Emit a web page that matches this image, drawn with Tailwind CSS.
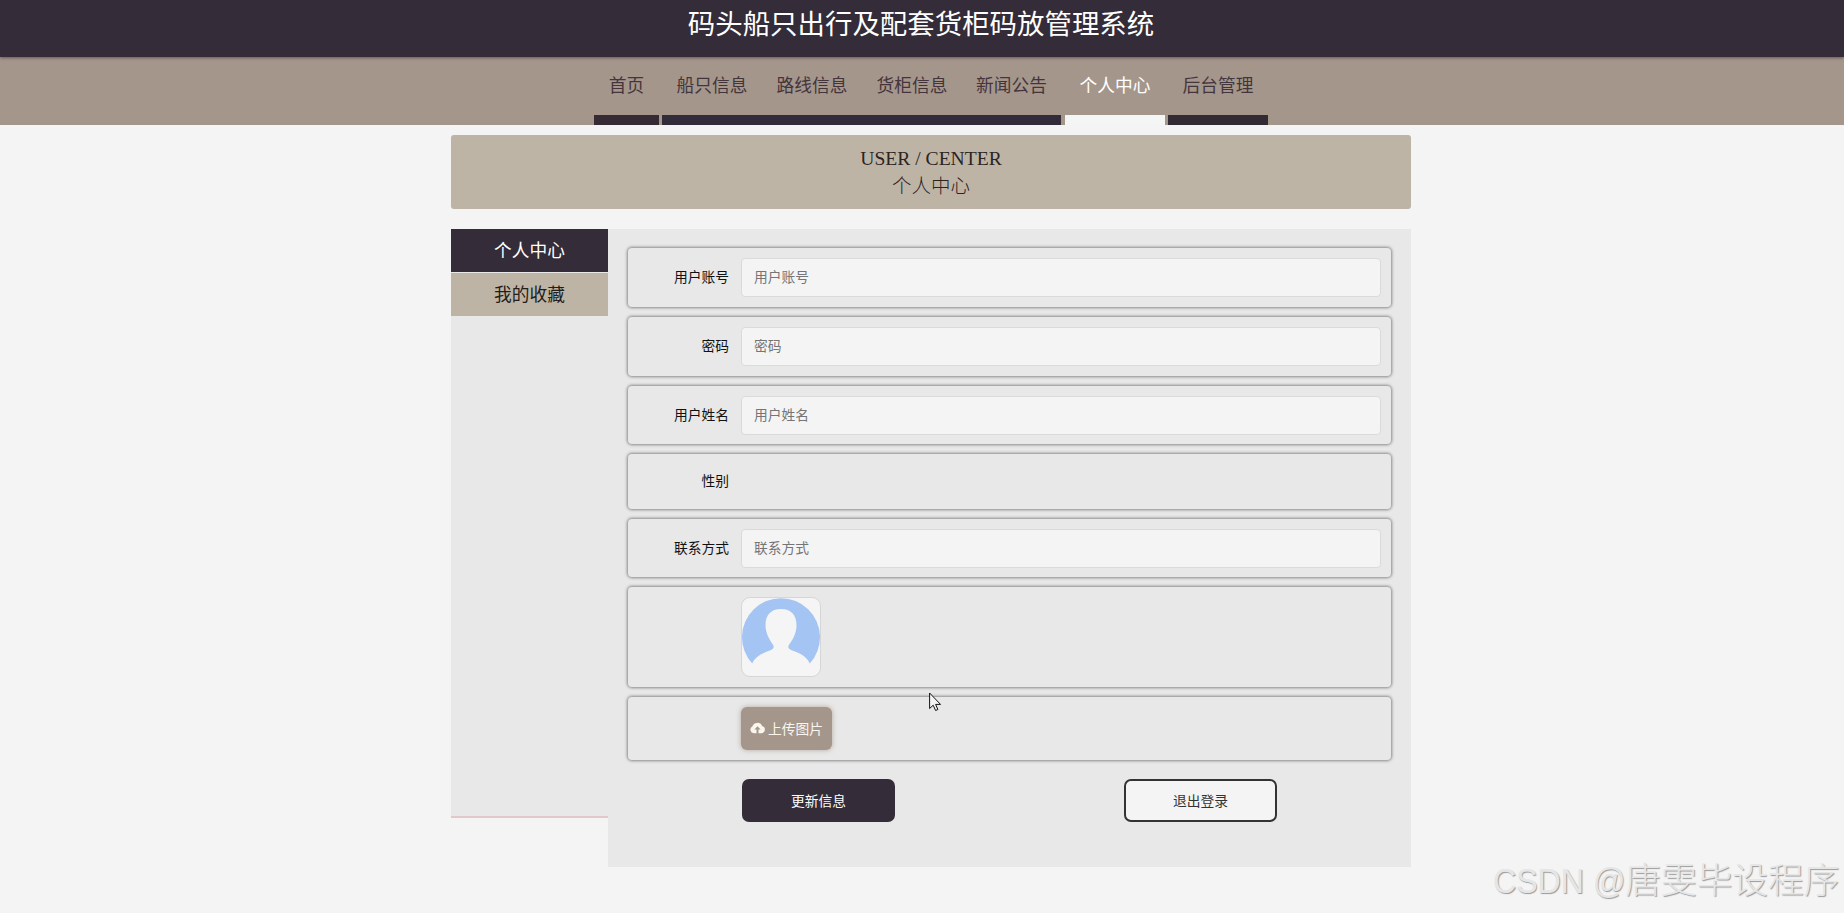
<!DOCTYPE html>
<html lang="zh-CN">
<head>
    <meta charset="UTF-8">
    <meta name="viewport" content="width=device-width, initial-scale=1.0">
    <title>码头船只出行及配套货柜码放管理系统</title>
    <script src="https://cdn.jsdelivr.net/npm/@tailwindcss/browser@4"></script>
</head>
<body class="relative h-[913px] overflow-hidden bg-[#f4f4f4] font-['Noto_Sans_CJK_SC',sans-serif] text-[13.75px] text-[#333]">
    <!-- Header -->
    <header class="relative z-10 flex h-[57px] justify-center bg-[#342c38] shadow-[0_1px_3px_rgba(0,0,0,0.4)]">
        <h1 class="pr-[2px] text-[27.45px] leading-[45px] text-white">码头船只出行及配套货柜码放管理系统</h1>
    </header>

    <!-- Navigation -->
    <nav class="h-[68px] bg-[#a5968c]">
        <div class="ml-[594px] flex h-full text-[17.7px] leading-[55px] text-[#44353c]">
            <a href="#" class="mr-[3px] w-[65px] border-b-[10px] border-[#362a34] text-center">首页</a>
            <a href="#" class="w-[100px] border-b-[10px] border-[#322b3a] text-center">船只信息</a>
            <a href="#" class="w-[100px] border-b-[10px] border-[#322b3a] text-center">路线信息</a>
            <a href="#" class="w-[100px] border-b-[10px] border-[#322b3a] text-center">货柜信息</a>
            <a href="#" class="mr-[4px] w-[99px] border-b-[10px] border-[#322b3a] text-center">新闻公告</a>
            <a href="#" class="mr-[3px] w-[100px] border-b-[10px] border-[#f4f5f5] text-center text-white">个人中心</a>
            <a href="#" class="w-[100px] border-b-[10px] border-[#322b33] text-center">后台管理</a>
        </div>
    </nav>

    <!-- Main Content -->
    <main class="ml-[451px] w-[960px] pt-[10px]">
        <div class="h-[74px] rounded-[3px] bg-[#beb4a6] pt-[11px] text-center text-[#2b241f]">
            <p class="font-['Liberation_Serif',serif] text-[19.6px] leading-[26px]">USER / CENTER</p>
            <p class="text-[19.5px] leading-[26px] font-light">个人中心</p>
        </div>

        <div class="mt-[20px] flex items-start">
            <!-- Sidebar -->
            <aside class="h-[589px] w-[157px] border-b-2 border-[#e2c8cb] bg-[#e8e8e8] text-center text-[17.7px] leading-[41px]">
                <a href="#" class="block h-[43px] bg-[#342c38] text-white">个人中心</a>
                <a href="#" class="mt-px block h-[43px] bg-[#beb4a6] text-[#231d1b]">我的收藏</a>
            </aside>

            <!-- User form -->
            <form class="h-[638px] w-[803px] bg-[#e8e8e8] pt-[19px] pr-[20px] pl-[20px]">
                <div class="flex h-[59px] items-center rounded-[4px] pr-[10px] shadow-[0_0_3px_1px_#888]">
                    <label class="w-[101px] pb-[2px] text-right text-[#111]">用户账号</label>
                    <input type="text" placeholder="用户账号" class="ml-[12px] h-[39px] min-w-0 flex-1 rounded-[4px] border border-[#dadada] bg-[#f4f4f4] px-[12px] pb-[3px] placeholder:text-[#757575]">
                </div>
                <div class="mt-[10px] flex h-[59px] items-center rounded-[4px] pr-[10px] shadow-[0_0_3px_1px_#888]">
                    <label class="w-[101px] pb-[2px] text-right text-[#111]">密码</label>
                    <input type="text" placeholder="密码" class="ml-[12px] h-[39px] min-w-0 flex-1 rounded-[4px] border border-[#dadada] bg-[#f4f4f4] px-[12px] pb-[3px] placeholder:text-[#757575]">
                </div>
                <div class="mt-[10px] flex h-[58px] items-center rounded-[4px] pr-[10px] shadow-[0_0_3px_1px_#888]">
                    <label class="w-[101px] pb-[2px] text-right text-[#111]">用户姓名</label>
                    <input type="text" placeholder="用户姓名" class="ml-[12px] h-[39px] min-w-0 flex-1 rounded-[4px] border border-[#dadada] bg-[#f4f4f4] px-[12px] pb-[3px] placeholder:text-[#757575]">
                </div>
                <div class="mt-[10px] flex h-[55px] items-center rounded-[4px] pr-[10px] shadow-[0_0_3px_1px_#888]">
                    <label class="w-[101px] pb-[2px] text-right text-[#111]">性别</label>
                </div>
                <div class="mt-[10px] flex h-[58px] items-center rounded-[4px] pr-[10px] shadow-[0_0_3px_1px_#888]">
                    <label class="w-[101px] pb-[2px] text-right text-[#111]">联系方式</label>
                    <input type="text" placeholder="联系方式" class="ml-[12px] h-[39px] min-w-0 flex-1 rounded-[4px] border border-[#dadada] bg-[#f4f4f4] px-[12px] pb-[3px] placeholder:text-[#757575]">
                </div>

                <!-- Avatar -->
                <div class="mt-[10px] flex h-[100px] items-center rounded-[4px] pl-[113px] shadow-[0_0_3px_1px_#888]">
                    <div class="h-[80px] w-[80px] overflow-hidden rounded-[9px] border border-[#d6d6d6] bg-[#f5f5f5]">
                        <svg viewBox="0 0 78 78" class="h-[78px] w-[78px]">
                            <path fill="#a4c5f4" d="M10.200 65.500A39 39 0 1 1 67.800 65.500C64 57 56 54.500 49 52C46 50.500 45.500 48.500 47.500 46C52 40 54.500 34 54.500 27C54.500 17 49 11 39 11C29 11 23.500 17 23.500 27C23.500 34 26.500 40 30.500 46C32.500 48.500 32 50.500 29 52C22 54.500 14 57.500 10.200 65.500Z"/>
                        </svg>
                    </div>
                </div>

                <!-- Upload -->
                <div class="mt-[10px] flex h-[63px] items-center rounded-[4px] pl-[113px] shadow-[0_0_3px_1px_#888]">
                    <button type="button" class="flex h-[43px] w-[91px] items-center justify-center rounded-[6px] bg-[#a5968c] pb-[1px] text-[#faf6ee] shadow-[0_0_5px_rgba(165,150,140,0.8)]">
                        <svg viewBox="0 0 15 12" class="mr-[3px] h-[12px] w-[15px]">
                            <path fill="#faf6ee" d="M3.800 11.200A3.500 3.500 0 0 1 2.300 4.600A5.200 5.200 0 0 1 12.100 4.100A3.600 3.600 0 0 1 11.400 11.200H8.500V7.500H10.600L7.500 4.200L4.400 7.500H6.500V11.200Z"/>
                        </svg>
                        上传图片
                    </button>
                </div>

                <div class="mt-[19px] flex pl-[114px]">
                    <button type="button" class="h-[43px] w-[153px] rounded-[7px] bg-[#342c38] pb-[1px] text-white">更新信息</button>
                    <button type="button" class="ml-[229px] h-[43px] w-[153px] rounded-[7px] border-2 border-[#333] bg-[#f4f4f4] pb-[1px]">退出登录</button>
                </div>
            </form>
        </div>
    </main>

    <!-- Mouse pointer -->
    <svg viewBox="0 0 13 20" class="absolute top-[692px] left-[929px] h-[20px] w-[13px]">
        <path fill="#f4f4f4" stroke="#111" stroke-width="1" d="M.600 1V16.500L4.200 13.200L6.600 18.500L8.900 17.500L6.600 12.400H11.500Z"/>
    </svg>

    <!-- Watermark -->
    <div class="absolute top-[856px] left-[1493px] font-['Liberation_Sans','Noto_Sans_CJK_SC',sans-serif] text-[35.7px] leading-[50px] font-light whitespace-nowrap text-[#e6e6e6] [text-shadow:1px_1px_1px_#999]"><span class="inline-block origin-left scale-x-90">CSDN @</span><span class="-ml-[15px]">唐雯毕设程序</span></div>
</body>
</html>
